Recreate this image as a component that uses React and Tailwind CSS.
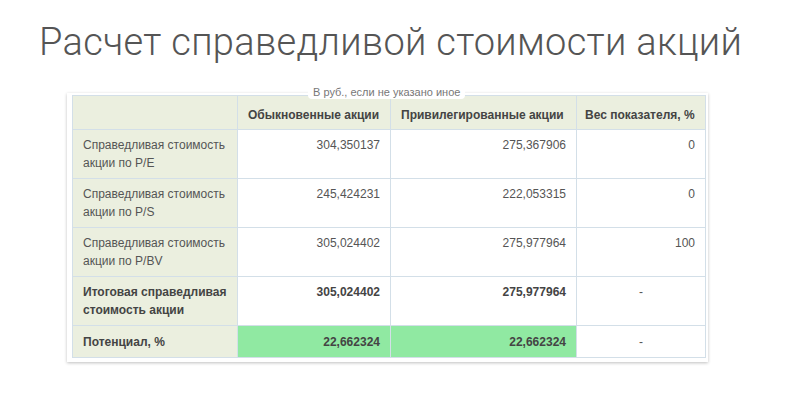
import React from "react";

const rows = [
  { label: "Справедливая стоимость акции по P/E", a: "304,350137", b: "275,367906", w: "0" },
  { label: "Справедливая стоимость акции по P/S", a: "245,424231", b: "222,053315", w: "0" },
  { label: "Справедливая стоимость акции по P/BV", a: "305,024402", b: "275,977964", w: "100" },
];

export default function App() {
  return (
    <div className="w-[800px] h-[396px] bg-white overflow-hidden" style={{ fontFamily: "'Liberation Sans', Arial, sans-serif" }}>
      <h1
        className="pl-[39px] pt-[20px] text-[38px] leading-[44px] font-light text-[#555555] tracking-[0.3px] whitespace-nowrap"
        style={{ fontFamily: "Roboto, sans-serif" }}
      >
        Расчет справедливой стоимости акций
      </h1>
      <div className="relative ml-[67px] mt-[29px] w-[641px] pl-[5px] pr-[3px] pt-[2px] pb-[4px] bg-white shadow-[0_1px_3px_rgba(0,0,0,0.25)]">
        <div className="absolute left-[241px] top-[-8px] bg-white px-[5px] text-[11px] leading-[14px] text-[#777777] rounded-sm">
          В руб., если не указано иное
        </div>
        <table className="w-[633px] border-collapse table-fixed text-[12px] leading-[18px] text-[#555555]">
          <colgroup>
            <col className="w-[165px]" />
            <col className="w-[153px]" />
            <col className="w-[186px]" />
            <col className="w-[129px]" />
          </colgroup>
          <thead>
            <tr className="h-[34px] bg-[#ebefdf]">
              <th className="border border-[#d3dfe8]"></th>
              <th className="border border-[#d3dfe8] text-left font-bold text-[#444444] px-[10px] pt-[4px]">Обыкновенные акции</th>
              <th className="border border-[#d3dfe8] text-left font-bold text-[#444444] px-[10px] pt-[4px]">Привилегированные акции</th>
              <th className="border border-[#d3dfe8] text-left font-bold text-[#444444] px-[8px] pt-[4px]">Вес показателя, %</th>
            </tr>
          </thead>
          <tbody>
            {rows.map((r) => (
              <tr key={r.label} className="h-[49px]">
                <td className="border border-[#d3dfe8] bg-[#ebefdf] align-top px-[10px] pt-[6px] pb-[4px]">{r.label}</td>
                <td className="border border-[#d3dfe8] align-top text-right px-[10px] pt-[6px]">{r.a}</td>
                <td className="border border-[#d3dfe8] align-top text-right px-[10px] pt-[6px]">{r.b}</td>
                <td className="border border-[#d3dfe8] align-top text-right px-[10px] pt-[6px]">{r.w}</td>
              </tr>
            ))}
            <tr className="h-[49px] font-bold text-[#444444]">
              <td className="border border-[#d3dfe8] bg-[#ebefdf] align-top px-[10px] pt-[6px] pb-[4px]">Итоговая справедливая стоимость акции</td>
              <td className="border border-[#d3dfe8] align-top text-right px-[10px] pt-[6px]">305,024402</td>
              <td className="border border-[#d3dfe8] align-top text-right px-[10px] pt-[6px]">275,977964</td>
              <td className="border border-[#d3dfe8] align-top text-center font-normal text-[#555555] px-[10px] pt-[6px]">-</td>
            </tr>
            <tr className="h-[32px] font-bold text-[#444444]">
              <td className="border border-[#d3dfe8] bg-[#ebefdf] align-middle px-[10px]">Потенциал, %</td>
              <td className="border border-[#d3dfe8] bg-[#90e9a2] align-middle text-right px-[10px]">22,662324</td>
              <td className="border border-[#d3dfe8] bg-[#90e9a2] align-middle text-right px-[10px]">22,662324</td>
              <td className="border border-[#d3dfe8] align-middle text-center font-normal text-[#555555] px-[10px]">-</td>
            </tr>
          </tbody>
        </table>
      </div>
    </div>
  );
}
